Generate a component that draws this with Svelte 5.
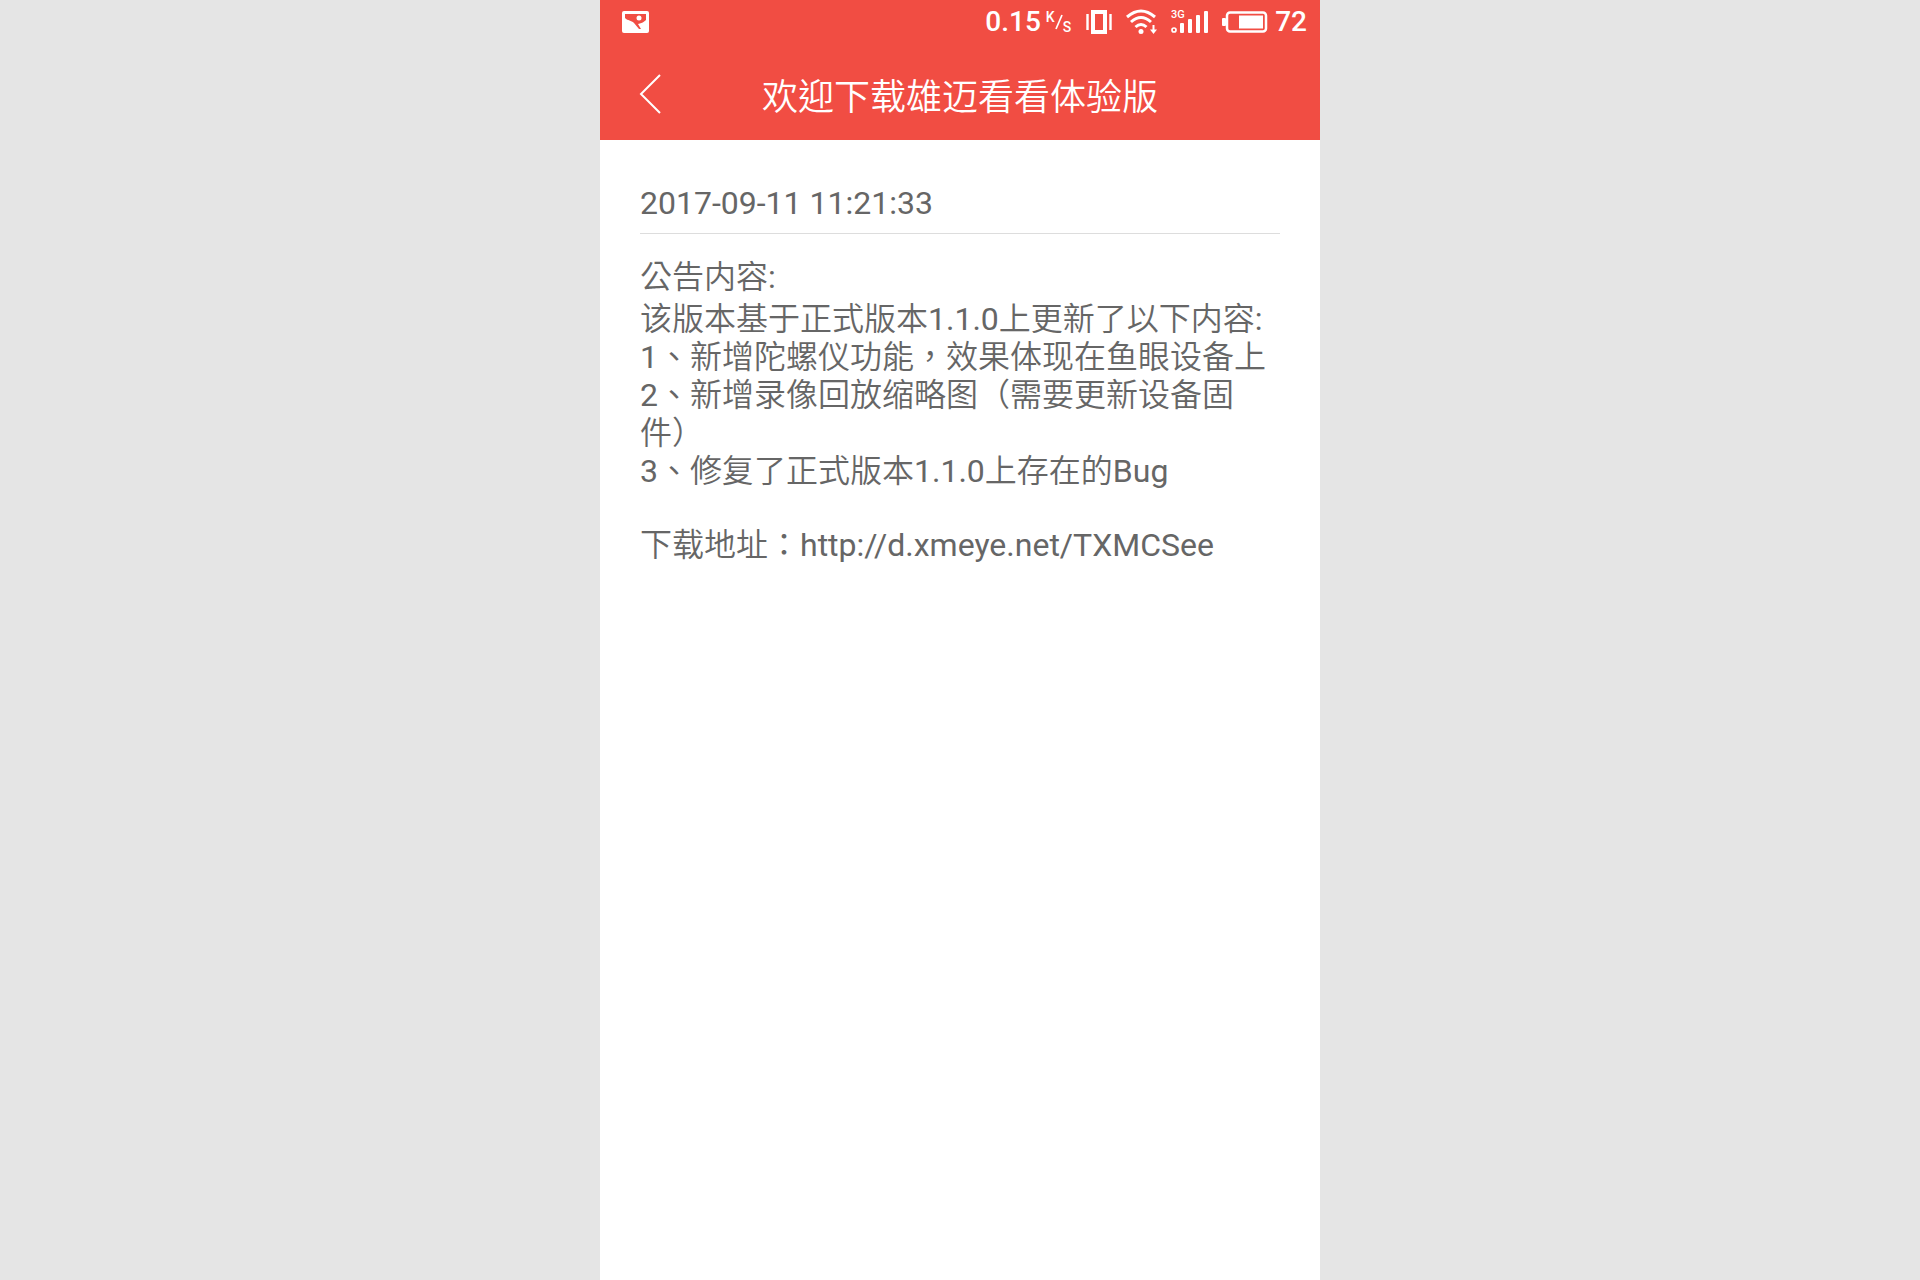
<script>
  const title = '欢迎下载雄迈看看体验版';
  const date = '2017-09-11 11:21:33';
  const url = 'http://d.xmeye.net/TXMCSee';

  const lines = [
    '该版本基于正式版本1.1.0上更新了以下内容:',
    '1、新增陀螺仪功能，效果体现在鱼眼设备上',
    '2、新增录像回放缩略图（需要更新设备固件）',
    '3、修复了正式版本1.1.0上存在的Bug',
  ];
</script>

<div class="phone">
  <div class="top">
    <div class="status">
      <svg class="picture" width="28" height="22" viewBox="0 0 28 22">
        <rect width="27" height="22" rx="2" fill="#fff" />
        <path d="M3 3H24V9C22 11 20 12 16 13L19 18L17 18L12 12C9 9 6 10 3 7Z" fill="#f14d43" />
        <circle cx="17" cy="7" r="2.5" fill="#fff" />
      </svg>

      <span class="speed">0.15</span>
      <span class="unit">
        <span class="up">K</span>
        <svg width="8" height="16" viewBox="0 0 8 16"><path d="M1 15L7 1" stroke="#fff" stroke-width="1.7" /></svg>
        <span class="down">S</span>
      </span>

      <svg class="vibrate" width="26" height="24" viewBox="0 0 26 24" fill="none" stroke="#fff">
        <rect x="7" y="2" width="12" height="20" stroke-width="4" />
        <path d="M1.5 4V20M24.5 4V20" stroke-width="2.4" />
      </svg>

      <svg class="wifi" width="32" height="26" viewBox="0 0 32 26" fill="none" stroke="#fff" stroke-width="3">
        <path d="M1 8Q15 -4 29 8M5 13Q15 4 25 13M9.5 18Q15 13 20.5 18" />
        <circle cx="15" cy="22.5" r="2.5" fill="#fff" stroke="none" />
        <path d="M27.5 16V22" stroke-width="2" />
        <path d="M24 20.5H31L27.5 25Z" fill="#fff" stroke="none" />
      </svg>

      <svg class="signal" width="38" height="32" viewBox="0 -4 38 32" fill="#fff">
        <text x="0" y="8" class="network">3G</text>
        <circle cx="3" cy="20" r="2" fill="none" stroke="#fff" stroke-width="1.7" />
        <rect x="9" y="13" width="4" height="10" rx="1" />
        <rect x="17" y="9" width="4" height="14" rx="1" />
        <rect x="25" y="5" width="4" height="18" rx="1" />
        <rect x="33" y="1" width="4" height="22" rx="1" />
      </svg>

      <svg class="battery" width="46" height="22" viewBox="0 0 46 22">
        <rect x="5" y="1.5" width="39" height="19" rx="3" fill="none" stroke="#fff" stroke-width="2.5" />
        <rect x="0" y="7" width="4" height="8" rx="1" fill="#fff" />
        <rect x="17" y="4.5" width="24" height="13" fill="#fff" />
      </svg>
      <span class="level">72</span>
    </div>

    <header>
      <button type="button" aria-label="返回">
        <svg width="24" height="44" viewBox="0 0 24 44" fill="none" stroke="#fff" stroke-width="2">
          <path d="M21 3L2 22L21 41" />
        </svg>
      </button>
      <h1>{title}</h1>
    </header>
  </div>

  <main>
    <time>{date}</time>
    <h2>公告内容:</h2>
    {#each lines as line}
      <p>{line}</p>
    {/each}
    <p class="address">下载地址：<a href={url}>{url}</a></p>
  </main>
</div>

<style>
  :global(body) {
    margin: 0;
    background: #e5e5e5;
  }

  .phone {
    width: 37.5%;
    min-height: 100vh;
    margin: 0 auto;
    background: #fff;
    color: #666;
    font-family: Roboto, "Noto Sans CJK TC DemiLight", "Noto Sans CJK TC", sans-serif;
  }

  .top {
    background: #f14d43;
    color: #fff;
  }

  .status {
    display: flex;
    align-items: center;
    height: 44px;
    padding: 0 13px 0 22px;
  }

  .status svg {
    display: block;
    flex: none;
  }

  .picture {
    margin-right: auto;
  }

  .speed,
  .level {
    font-size: 28px;
    line-height: 44px;
    font-weight: 500;
  }

  .unit {
    display: flex;
    align-items: center;
    height: 24px;
    margin-left: 5px;
    font-size: 14px;
    line-height: 14px;
    font-weight: 500;
  }

  .up {
    align-self: flex-start;
  }

  .down {
    align-self: flex-end;
  }

  .vibrate {
    margin-left: 15px;
  }

  .wifi {
    margin-left: 14px;
  }

  .signal {
    margin-left: 13px;
  }

  .network {
    font-size: 11px;
    font-weight: 500;
  }

  .battery {
    margin-left: 13px;
  }

  .level {
    margin-left: 7px;
  }

  header {
    display: grid;
    grid-template-columns: 80px 1fr 80px;
    align-items: center;
    height: 92px;
    padding-top: 4px;
  }

  button {
    display: flex;
    margin: 0;
    padding: 0 0 0 39px;
    border: 0;
    background: none;
    cursor: pointer;
  }

  h1 {
    margin: 0;
    font-family: "Noto Sans CJK TC", sans-serif;
    font-size: 36px;
    line-height: 48px;
    font-weight: 350;
    text-align: center;
  }

  main {
    padding: 40px;
    font-size: 32px;
    line-height: 38px;
  }

  time {
    display: block;
    padding: 4px 0 11px;
    border-bottom: 1px solid #ddd;
  }

  h2 {
    margin: 24px 0 4px;
    font-size: 32px;
    line-height: 38px;
    font-weight: 400;
  }

  p {
    margin: 0;
  }

  .address {
    margin-top: 36px;
  }

  a {
    color: inherit;
    text-decoration: none;
  }
</style>
